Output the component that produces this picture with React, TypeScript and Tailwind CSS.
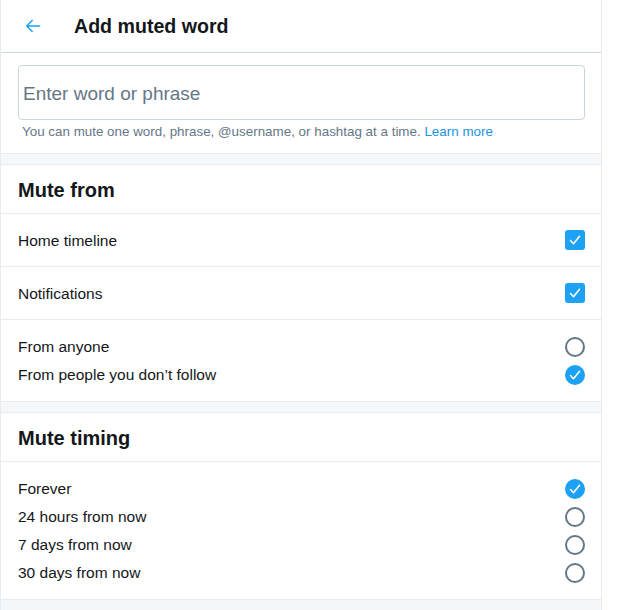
const font = "font-['Helvetica_Neue','Liberation_Sans',Arial,sans-serif]";

function Check() {
  return (
    <svg viewBox="0 0 20 20" className="h-[20px] w-[20px]">
      <path
        d="M5.5 10.5l3 3.2 6-7.4"
        fill="none"
        stroke="white"
        strokeWidth="1.6"
        strokeLinecap="round"
        strokeLinejoin="round"
      />
    </svg>
  );
}

function Checkbox() {
  return (
    <div className="flex h-[20px] w-[20px] shrink-0 items-center justify-center rounded-[3px] bg-[#1da1f2]">
      <Check />
    </div>
  );
}

function Radio({ checked }: { checked: boolean }) {
  if (checked) {
    return (
      <div className="flex h-[20px] w-[20px] shrink-0 items-center justify-center rounded-full bg-[#1da1f2]">
        <Check />
      </div>
    );
  }
  return (
    <div className="h-[20px] w-[20px] shrink-0 rounded-full border-2 border-[#657786]" />
  );
}

function Gap() {
  return (
    <div className="h-[12px] border-y border-[#e6ecf0] bg-[#f5f8fa]" />
  );
}

function SectionTitle({ children }: { children: string }) {
  return (
    <div className="flex h-[49px] items-center border-b border-[#e6ecf0] pl-[17px] pt-[2px] text-[20px] font-bold text-[#14171a]">
      {children}
    </div>
  );
}

function CheckRow({ label }: { label: string }) {
  return (
    <div className="flex h-[53px] items-center justify-between border-b border-[#e6ecf0] pl-[17px] pr-[16px] text-[15.5px] text-[#14171a]">
      <span className="pt-[2px]">{label}</span>
      <Checkbox />
    </div>
  );
}

function RadioRow({ label, checked }: { label: string; checked: boolean }) {
  return (
    <div className="flex h-[28px] items-center justify-between pl-[17px] pr-[16px] text-[15.5px] text-[#14171a]">
      <span>{label}</span>
      <Radio checked={checked} />
    </div>
  );
}

export default function App() {
  return (
    <div className={`h-[610px] w-[618px] overflow-hidden bg-white ${font}`}>
      <div className="w-[602px] border-x border-[#e6ecf0]">
        {/* Header */}
        <div className="flex h-[53px] items-center border-b border-[#ccd6dd]">
          <div className="flex w-[73px] pl-[22px]">
            <svg viewBox="0 0 24 24" className="h-[20px] w-[20px] text-[#1da1f2]">
              <path
                d="M20 12H5M11 5.5L4.5 12l6.5 6.5"
                fill="none"
                stroke="currentColor"
                strokeWidth="1.8"
                strokeLinecap="round"
                strokeLinejoin="round"
              />
            </svg>
          </div>
          <h1 className="pt-[2px] text-[19.6px] font-bold text-[#14171a]">Add muted word</h1>
        </div>

        {/* Input */}
        <div className="pt-[12px] pb-[13px] pl-[17px] pr-[16px]">
          <div className="flex h-[55px] items-center rounded-[4px] border border-[#ccd6dd] px-[4px] pt-[4px] text-[19px] text-[#657786]">
            Enter word or phrase
          </div>
          <div className="mt-[4px] pl-[4px] text-[13.4px] leading-[16px] text-[#657786]">
            You can mute one word, phrase, @username, or hashtag at a time.{" "}
            <span className="text-[#1b95e0]">Learn more</span>
          </div>
        </div>

        <Gap />

        <SectionTitle>Mute from</SectionTitle>
        <CheckRow label="Home timeline" />
        <CheckRow label="Notifications" />
        <div className="pt-[13px] pb-[12px]">
          <RadioRow label="From anyone" checked={false} />
          <RadioRow label="From people you don’t follow" checked={true} />
        </div>

        <Gap />

        <SectionTitle>Mute timing</SectionTitle>
        <div className="pt-[13px] pb-[12px]">
          <RadioRow label="Forever" checked={true} />
          <RadioRow label="24 hours from now" checked={false} />
          <RadioRow label="7 days from now" checked={false} />
          <RadioRow label="30 days from now" checked={false} />
        </div>

        <Gap />
      </div>
    </div>
  );
}
